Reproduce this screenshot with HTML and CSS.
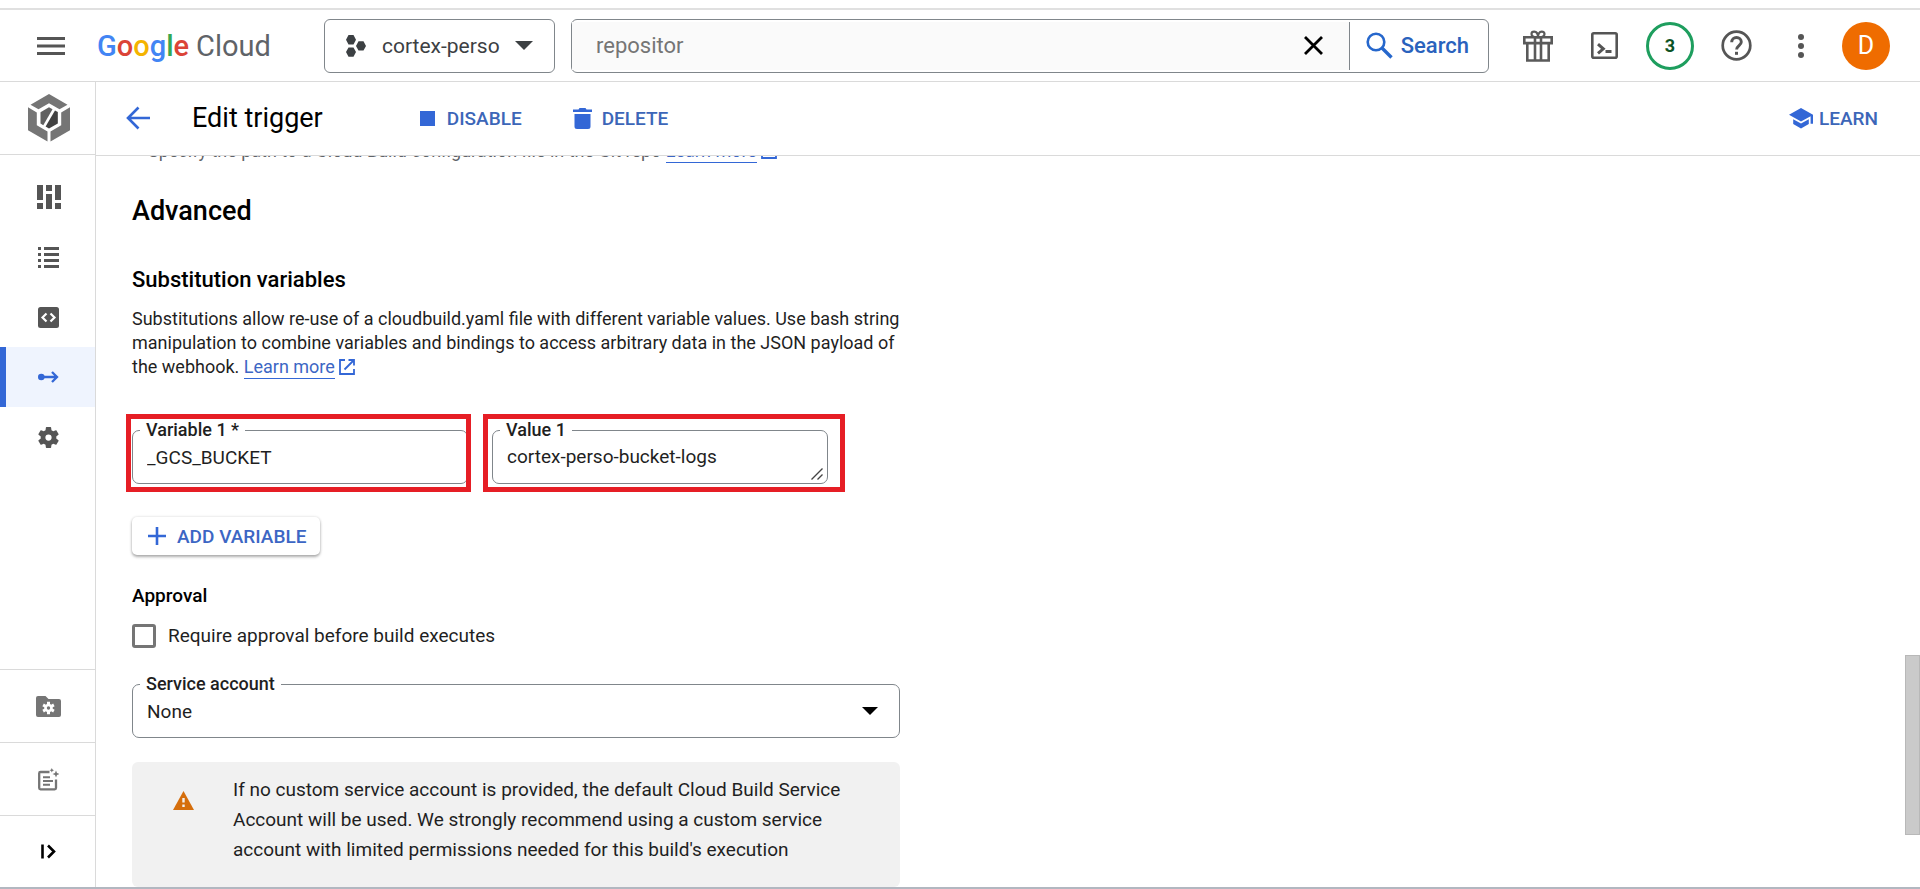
FILE: index.html
```html
<!DOCTYPE html>
<html lang="en">
<head>
<meta charset="utf-8">
<title>Edit trigger – Cloud Build</title>
<link rel="stylesheet" href="styles.css">
</head>
<body>
<div class="app">
  <header class="topbar">
    <button class="icon-btn menu-btn" aria-label="Menu">
      <svg width="28" height="18" viewBox="0 0 28 18" fill="#555"><path d="M0 0h28v3H0zM0 7.500h28v3H0zM0 15h28v3H0z"/></svg>
    </button>
    <a class="logo" href="#"><span class="logo-google"><span class="c-blue">G</span><span class="c-red">o</span><span class="c-yellow">o</span><span class="c-blue">g</span><span class="c-green">l</span><span class="c-red">e</span></span><span class="logo-cloud">Cloud</span></a>
    <button class="project">
      <svg width="20" height="22" viewBox="0 0 20 22" fill="#3c4043"><path d="M2.500 0h5L10 4.700 7.500 9.400h-5L0 4.700zM2.500 12.400h5L10 17.100 7.500 21.800h-5L0 17.100zM12.500 6.200h5L20 10.900l-2.500 4.700h-5L10 10.900z"/></svg>
      <span class="project-name">cortex-perso</span>
      <svg width="18" height="9" viewBox="0 0 18 9" fill="#3c4043"><path d="M0 0h18L9 9z"/></svg>
    </button>
    <form class="search">
      <div class="search-field">
        <input type="text" value="repositor" aria-label="Search query">
        <button type="button" class="icon-btn" aria-label="Clear">
          <svg width="19" height="19" viewBox="0 0 19 19" stroke="#000" stroke-width="2.800" fill="none"><path d="M1 1l17 17M18 1L1 18"/></svg>
        </button>
      </div>
      <button type="button" class="search-btn">
        <svg width="27" height="27" viewBox="0 0 27 27" stroke="#2667cc" fill="none"><circle cx="10" cy="10" r="8.300" stroke-width="2.600"/><path d="M16 16l9.500 9.500" stroke-width="3.400"/></svg>
        <span>Search</span>
      </button>
    </form>
    <div class="tools">
      <button class="icon-btn" aria-label="Gift">
        <svg width="30" height="32" viewBox="0 0 30 32" fill="none" stroke="#5a5a5a" stroke-width="2.600"><path d="M1.300 7.300h27.400v5.800H1.300zM4.300 13.100v17.400h21.400V13.100M12 7.300v23M18 7.300v23"/><path d="M15 7.300C10 7.300 8.500 5.500 8.500 3.900 8.500 2.500 9.800 1.600 11.200 1.600 13.800 1.600 15 4 15 7.300zM15 7.300c5 0 6.500-1.800 6.500-3.400 0-1.400-1.300-2.300-2.700-2.300C16.200 1.600 15 4 15 7.300z" stroke-width="2.200"/></svg>
      </button>
      <button class="icon-btn" aria-label="Cloud Shell">
        <svg width="27" height="27" viewBox="0 0 27 27" fill="none" stroke="#555"><rect x="1.300" y="1.300" width="24.400" height="24.400" rx="1.500" stroke-width="2.600"/><path d="M7 12.200l5.300 4.600L7 21.400" stroke-width="3"/><path d="M14.500 19.500h6" stroke-width="3"/></svg>
      </button>
      <button class="badge" aria-label="Notifications">3</button>
      <button class="icon-btn" aria-label="Help">
        <svg width="31" height="31" viewBox="0 0 31 31" fill="none" stroke="#555"><circle cx="15.500" cy="15.500" r="13.800" stroke-width="2.700"/><path d="M10.700 12.300c0-2.800 2.100-4.800 4.800-4.800s4.800 2 4.800 4.600c0 3.200-4.700 4-4.700 7.400" stroke-width="2.900"/><path d="M14 21.800h3v3h-3z" fill="#555" stroke="none"/></svg>
      </button>
      <button class="icon-btn dots" aria-label="More">
        <svg width="6" height="24" viewBox="0 0 6 24" fill="#555"><circle cx="3" cy="3" r="3"/><circle cx="3" cy="12" r="3"/><circle cx="3" cy="21" r="3"/></svg>
      </button>
      <button class="avatar" aria-label="Account">D</button>
    </div>
  </header>

  <div class="body">
    <nav class="sidebar" aria-label="Cloud Build">
      <a class="product" href="#" aria-label="Cloud Build">
        <svg width="42" height="48" viewBox="0 0 42 48"><path fill="#757575" d="M21 0L39.500 10.700 31.500 15.300 21 9.300 10.500 15.300 2.500 10.700zM0 13.200l8.800 5.200v12.800L19.500 37.500V47.500L0 36.200zM42 13.200l-8.800 5.200v12.800L22.500 37.500V47.500L42 36.200z"/><path fill="#616161" d="M21 13.200l3.500 2-9.200 16-2.800-1.600V18.200z"/><path fill="#424242" d="M27 16.400l2.800 1.600v11.600L21 34.500l-3.400-1.900z"/></svg>
      </a>
      <div class="nav-list">
        <a class="nav-item" href="#" aria-label="Dashboard"><svg width="24" height="24" viewBox="0 0 24 24" fill="#555"><path d="M0 0h6v15H0zM0 18h6v6H0zM9 0h6v6H9zM9 9h6v15H9zM18 0h6v15h-6zM18 18h6v6h-6z"/></svg></a>
        <a class="nav-item" href="#" aria-label="History"><svg width="21" height="21" viewBox="0 0 21 21" fill="#555"><path d="M0 0h3v3H0zM6 0h15v3H6zM0 6h3v3H0zM6 6h15v3H6zM0 12h3v3H0zM6 12h15v3H6zM0 18h3v3H0zM6 18h15v3H6z"/></svg></a>
        <a class="nav-item" href="#" aria-label="Repositories"><svg width="21" height="21" viewBox="0 0 21 21"><rect width="21" height="21" rx="2.500" fill="#555"/><path d="M8.500 6.500l-4 4 4 4M12.500 6.500l4 4-4 4" fill="none" stroke="#fff" stroke-width="2.200"/></svg></a>
        <a class="nav-item active" href="#" aria-label="Triggers" aria-current="page"><svg width="21" height="12" viewBox="0 0 21 12"><circle cx="3.300" cy="6" r="3.300" fill="#3367d6"/><path d="M3 6h16M14 1l5 5-5 5" fill="none" stroke="#3367d6" stroke-width="2.300"/></svg></a>
        <a class="nav-item" href="#" aria-label="Settings"><svg width="25" height="25" viewBox="0 0 24 24" fill="#555"><path d="M19.430 12.980c.04-.32.070-.64.070-.98s-.03-.66-.07-.98l2.110-1.650c.19-.15.240-.42.120-.64l-2-3.460c-.12-.22-.39-.3-.61-.22l-2.490 1c-.52-.4-1.080-.73-1.690-.98l-.38-2.650C14.460 2.180 14.250 2 14 2h-4c-.25 0-.46.180-.49.420l-.38 2.650c-.61.250-1.170.590-1.690.980l-2.490-1c-.23-.09-.49 0-.61.220l-2 3.460c-.13.220-.07.490.120.640l2.110 1.650c-.04.320-.07.650-.07.980s.03.660.07.980l-2.110 1.650c-.19.150-.24.420-.12.640l2 3.460c.12.220.39.300.61.220l2.490-1c.52.400 1.080.73 1.690.98l.38 2.650c.03.240.24.420.49.420h4c.25 0 .46-.18.490-.42l.38-2.650c.61-.25 1.170-.59 1.690-.98l2.490 1c.23.090.49 0 .61-.22l2-3.460c.12-.22.070-.49-.12-.64l-2.110-1.650zM12 15a3 3 0 110-6 3 3 0 010 6z"/></svg></a>
      </div>
      <div class="nav-foot">
        <a class="foot-item" href="#" aria-label="Manage resources"><svg width="25" height="21" viewBox="0 0 25 21"><path fill="#757575" d="M2 0h7.500l3 3H23a2 2 0 012 2v14a2 2 0 01-2 2H2a2 2 0 01-2-2V2a2 2 0 012-2z"/><path fill="none" stroke="#fff" stroke-width="3" d="M12.500 5.800v2.600M12.500 15.600v2.600M7.100 8.900l2.300 1.300M15.600 13.800l2.300 1.300M17.900 8.900l-2.300 1.300M9.400 13.800l-2.300 1.300"/><circle cx="12.500" cy="12" r="3" fill="none" stroke="#fff" stroke-width="2.600"/></svg></a>
        <a class="foot-item" href="#" aria-label="Release notes"><svg width="21" height="23" viewBox="0 0 21 23"><path fill="none" stroke="#757575" stroke-width="2.300" d="M11.500 4H2.500A1.300 1.300 0 001.200 5.300v14.800a1.300 1.300 0 001.300 1.300h14.200a1.300 1.300 0 001.300-1.300V11.500"/><path stroke="#757575" stroke-width="2" d="M5 9.300h7M5 13h10M5 16.700h7"/><path fill="#757575" d="M18 2.500l1 2.500 2.500 1-2.500 1-1 2.500L17 7l-2.500-1L17 5zM13.800 0l.7 1.500 1.500.7-1.500.7-.7 1.500-.7-1.500-1.500-.7 1.500-.7z"/></svg></a>
        <button class="foot-item" aria-label="Expand navigation"><svg width="15" height="15" viewBox="0 0 15 15" fill="none" stroke="#000"><path d="M1.500 .5v14" stroke-width="2.600"/><path d="M7 1.500l6 6-6 6" stroke-width="2.600"/></svg></button>
      </div>
    </nav>

    <main class="main">
      <div class="actionbar">
        <a class="back" href="#" aria-label="Back"><svg width="24" height="24" viewBox="0 0 24 24" fill="none" stroke="#3367d6" stroke-width="2.600"><path d="M24 12H2M12.500 1.500L2 12l10.500 10.500"/></svg></a>
        <h1>Edit trigger</h1>
        <button class="action"><svg width="15" height="15" viewBox="0 0 15 15" fill="#3367d6"><path d="M0 0h15v15H0z"/></svg>DISABLE</button>
        <button class="action action-delete"><svg width="19" height="21" viewBox="0 0 19 21" fill="#3367d6"><path d="M0 1.500h5.500L6.500 0h6l1 1.500H19V4H0zM1.500 6h16v12.500a2.500 2.500 0 01-2.500 2.500H4a2.500 2.500 0 01-2.500-2.500z"/></svg>DELETE</button>
        <button class="action learn"><svg width="24" height="21" viewBox="0 0 24 21" fill="#3367d6"><path d="M12 0l12 6.800v9h-2.400V8.300L12 13.400 0 6.800zM4.200 11.200L12 15.500l7.800-4.300v4.900L12 20.500l-7.800-4.400z"/></svg>LEARN</button>
      </div>

      <div class="scroll">
        <p class="hint">Specify the path to a Cloud Build configuration file in the Git repo <a class="link" href="#">Learn more</a> <svg class="ext" width="16" height="16" viewBox="0 0 16 16" fill="none" stroke="#3367d6" stroke-width="1.800"><path d="M6 1H1v14h14v-5M9.500 1H15v5.500M15 1L5.500 10.500"/></svg></p>
        <h2>Advanced</h2>
        <h3>Substitution variables</h3>
        <p class="desc">Substitutions allow re-use of a cloudbuild.yaml file with different variable values. Use bash string manipulation to combine variables and bindings to access arbitrary data in the JSON payload of the webhook. <a class="link" href="#">Learn more</a> <svg class="ext" width="16" height="16" viewBox="0 0 16 16" fill="none" stroke="#3367d6" stroke-width="1.800"><path d="M6 1H1v14h14v-5M9.500 1H15v5.500M15 1L5.500 10.500"/></svg></p>

        <div class="pair">
          <div class="field">
            <label for="var1">Variable 1 *</label>
            <input id="var1" type="text" value="_GCS_BUCKET">
            <span class="mark mark-var"></span>
          </div>
          <div class="field">
            <label for="val1">Value 1</label>
            <textarea id="val1" rows="1">cortex-perso-bucket-logs</textarea>
            <svg class="grip" width="12" height="12" viewBox="0 0 12 12" stroke="#444" stroke-width="1.400" fill="none"><path d="M.5 11.500l11-11M6.500 11.500l5-5"/></svg>
            <span class="mark mark-val"></span>
          </div>
        </div>

        <button class="add"><svg width="18" height="18" viewBox="0 0 18 18" stroke="#3367d6" stroke-width="2.600"><path d="M9 0v18M0 9h18"/></svg>ADD VARIABLE</button>

        <h4>Approval</h4>
        <div class="check">
          <input type="checkbox" id="approve">
          <label for="approve">Require approval before build executes</label>
        </div>

        <div class="field">
          <label for="account">Service account</label>
          <select id="account"><option>None</option></select>
          <svg class="caret" width="16" height="8" viewBox="0 0 16 8"><path d="M0 0h16L8 8z"/></svg>
        </div>

        <div class="notice">
          <svg width="21" height="19" viewBox="0 0 21 19"><path fill="#d56e0c" d="M10.500 0L21 19H0z"/><path fill="#f1f1f1" d="M9.300 7h2.400v4.500H9.300zM9.300 13.500h2.400V16H9.300z"/></svg>
          <p>If no custom service account is provided, the default Cloud Build Service Account will be used. We strongly recommend using a custom service account with limited permissions needed for this build's execution</p>
        </div>
      </div>
      <div class="thumb"></div>
    </main>
  </div>
</div>
</body>
</html>
```
FILE: styles.css
```css
* {
  box-sizing: border-box;
}

body {
  margin: 0;
  font-family: Roboto, "Liberation Sans", sans-serif;
  font-size: 19px;
  color: #1f1f1f;
  background: #fff;
}

button,
input,
select,
textarea {
  font: inherit;
  color: inherit;
  margin: 0;
  padding: 0;
  border: 0;
  background: none;
}

h1, h2, h3, h4, p {
  margin: 0;
}

a {
  color: inherit;
  text-decoration: none;
}

svg {
  display: block;
  flex: none;
}

.app {
  display: flex;
  flex-direction: column;
  height: 100vh;
  padding-top: 8px;
  border-bottom: 2px solid #b2b7c0;
  overflow: hidden;
}

/* Top bar */
.topbar {
  display: flex;
  align-items: center;
  flex: none;
  height: 74px;
  padding: 0 30px 0 37px;
  border-top: 2px solid #e0e0e0;
  border-bottom: 1px solid #dadada;
}

.icon-btn {
  display: flex;
  align-items: center;
  justify-content: center;
}

.logo {
  display: flex;
  gap: 7px;
  width: 194px;
  margin: 0 0 0 32px;
  font-size: 29px;
  line-height: 36px;
}

.logo-google { font-weight: 500; }
.logo-cloud { color: #5f6368; }
.c-blue { color: #4285f4; }
.c-red { color: #db4437; }
.c-yellow { color: #f4b400; }
.c-green { color: #34a853; }

.project {
  display: flex;
  align-items: center;
  flex: none;
  width: 231px;
  height: 54px;
  margin-left: 33px;
  padding: 0 21px;
  border: 1px solid #80868b;
  border-radius: 6px;
  color: #3c4043;
  font-size: 21px;
}

.project-name {
  flex: 1;
  padding-left: 16px;
  text-align: left;
}

.search {
  display: flex;
  flex: 1;
  height: 54px;
  margin-left: 16px;
  border: 1px solid #80868b;
  border-radius: 6px;
  font-size: 22px;
}

.search-field {
  display: flex;
  align-items: center;
  flex: 1;
  margin: 2px 0;
  padding: 0 26px 0 24px;
  border-right: 1px solid #80868b;
  background: #fafafa;
}

.search-field input {
  flex: 1;
  min-width: 0;
  color: #757575;
}

.search-btn {
  display: flex;
  align-items: center;
  gap: 8px;
  padding: 0 19px 0 16px;
  color: #2a62bd;
  font-weight: 500;
}

.tools {
  display: flex;
  align-items: center;
  gap: 18px;
  margin-left: 25px;
}

.tools > .icon-btn {
  width: 48px;
}

.tools .dots {
  width: 46px;
}

.badge,
.avatar {
  width: 48px;
  height: 48px;
  border-radius: 50%;
}

.badge {
  border: 3px solid #1e9e5e;
  color: #0d5326;
  font-size: 18px;
  font-weight: 700;
}

.avatar {
  background: #ef6c00;
  color: #fff;
  font-size: 25px;
}

/* Side navigation */
.body {
  display: flex;
  flex: 1;
  min-height: 0;
}

.sidebar {
  display: flex;
  flex-direction: column;
  flex: none;
  width: 96px;
  border-right: 1px solid #dadada;
}

.product,
.nav-item,
.foot-item {
  display: flex;
  align-items: center;
  justify-content: center;
  padding-left: 2px;
}

.product {
  height: 73px;
  border-bottom: 1px solid #dadada;
}

.nav-list {
  flex: 1;
  padding-top: 12px;
}

.nav-item {
  height: 60px;
}

.nav-item.active {
  border-left: 6px solid #3367d6;
  padding: 0 4px 0 0;
  background: #eff4fe;
}

.foot-item {
  width: 100%;
  height: 73px;
  border-top: 1px solid #dadada;
}

.foot-item:last-child {
  height: 72px;
}

/* Main column */
.main {
  position: relative;
  display: flex;
  flex-direction: column;
  flex: 1;
  min-width: 0;
}

.actionbar {
  display: flex;
  align-items: center;
  flex: none;
  height: 74px;
  padding: 0 42px 1px 30px;
  border-bottom: 1px solid #dadada;
}

h1 {
  margin-left: 42px;
  color: #000;
  font-size: 27px;
  font-weight: 400;
}

.action {
  display: flex;
  align-items: center;
  gap: 12px;
  margin-left: 97px;
  color: #3c66b8;
  font-weight: 500;
}

.action-delete {
  gap: 10px;
  margin-left: 51px;
}

.learn {
  gap: 6px;
  margin-left: auto;
}

.scroll {
  flex: 1;
  min-height: 0;
  width: 804px;
  padding: 0 0 0 36px;
  overflow: hidden;
}

.hint {
  margin-top: -17px;
  padding-left: 16px;
  color: #5f6368;
  font-size: 18px;
  line-height: 24px;
}

.link {
  padding-bottom: 1px;
  border-bottom: 1px solid #3367d6;
  color: #3c66c4;
}

.ext {
  display: inline-block;
  vertical-align: -2px;
}

h2 {
  margin-top: 32px;
  color: #000;
  font-size: 27px;
  font-weight: 500;
  line-height: 32px;
}

h3 {
  margin-top: 39px;
  color: #000;
  font-size: 22px;
  font-weight: 500;
  line-height: 28px;
}

.desc {
  margin-top: 13px;
  font-size: 18px;
  line-height: 24px;
}

.pair {
  display: grid;
  grid-template-columns: 336px 336px;
  gap: 24px;
  margin-top: 51px;
}

.field {
  position: relative;
}

.field label {
  position: absolute;
  top: -12px;
  left: 8px;
  padding: 0 6px;
  background: #fff;
  font-size: 18px;
  font-weight: 500;
  line-height: 24px;
}

.field input,
.field textarea,
.field select {
  display: block;
  width: 100%;
  height: 54px;
  padding: 0 14px;
  border: 1px solid #80868b;
  border-radius: 7px;
  appearance: none;
  resize: none;
}

.field textarea {
  padding-top: 13px;
  line-height: 26px;
  overflow: hidden;
}

.grip {
  position: absolute;
  right: 5px;
  bottom: 4px;
}

.caret {
  position: absolute;
  right: 22px;
  top: 23px;
}

.mark {
  position: absolute;
  top: -16px;
  bottom: -8px;
  border: 5px solid #e61e25;
  pointer-events: none;
}

.mark-var {
  left: -6px;
  right: -3px;
}

.mark-val {
  left: -9px;
  right: -17px;
}

.add {
  display: flex;
  align-items: center;
  gap: 11px;
  height: 38px;
  margin-top: 33px;
  padding: 0 14px 0 16px;
  border-radius: 5px;
  box-shadow: 0 2px 3px rgba(0, 0, 0, 0.3), 0 0 3px rgba(0, 0, 0, 0.14);
  color: #3c66c4;
  font-weight: 500;
}

h4 {
  margin-top: 29px;
  color: #000;
  font-size: 19px;
  font-weight: 500;
  line-height: 24px;
}

.check {
  display: flex;
  align-items: center;
  gap: 12px;
  margin: 14px 0 34px;
  line-height: 28px;
}

.check input {
  width: 24px;
  height: 24px;
  border: 3px solid #757575;
  border-radius: 3px;
  appearance: none;
}

.notice {
  display: flex;
  gap: 39px;
  margin-top: 24px;
  padding: 13px 34px 22px 41px;
  border-radius: 6px;
  background: #f1f1f1;
  line-height: 30px;
}

.notice svg {
  margin-top: 16px;
}

.thumb {
  position: absolute;
  top: 573px;
  right: 0;
  width: 15px;
  height: 180px;
  border: 1px solid #b8b8b8;
  background: #cacaca;
}
```
